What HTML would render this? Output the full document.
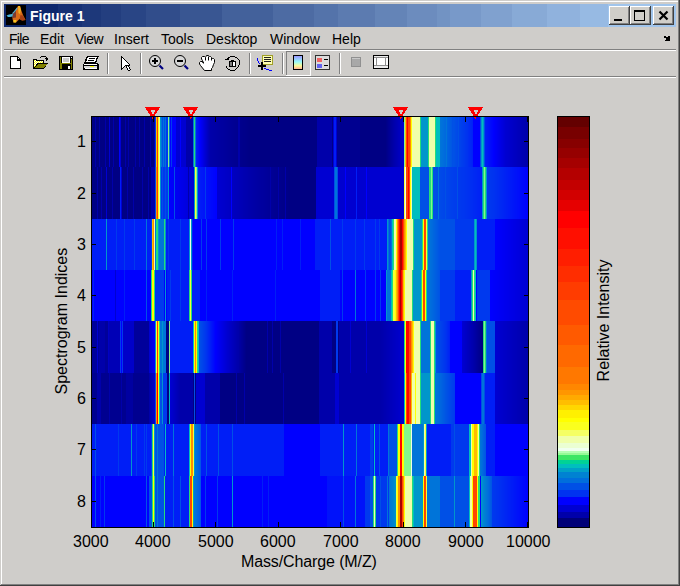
<!DOCTYPE html>
<html><head><meta charset="utf-8">
<style>
*{margin:0;padding:0;box-sizing:border-box}
html,body{width:680px;height:586px;overflow:hidden;background:#cfcdca;font-family:"Liberation Sans",sans-serif}
.abs{position:absolute}
.menu{position:absolute;top:31px;font-size:14px;line-height:16px;color:#000;white-space:nowrap}
.lbl{position:absolute;font-size:16px;color:#000;line-height:17px;white-space:nowrap}
svg{position:absolute;left:0;top:0}
</style></head><body>
<svg width="680" height="586" viewBox="0 0 680 586" shape-rendering="crispEdges">
 <!-- window frame -->
 <rect x="0" y="0" width="680" height="586" fill="#cfcdca"/>
 <rect x="1" y="1" width="677" height="1" fill="#fff"/>
 <rect x="1" y="1" width="1" height="583" fill="#fff"/>
 <rect x="678" y="0" width="1" height="585" fill="#808080"/>
 <rect x="679" y="0" width="1" height="586" fill="#404040"/>
 <rect x="0" y="585" width="680" height="1" fill="#404040"/>
 <rect x="1" y="584" width="678" height="1" fill="#808080"/>
 <!-- title bar -->
 <defs>
  <linearGradient id="tg" x1="0" x2="1" y1="0" y2="0">
   <stop offset="0" stop-color="#0a246a"/><stop offset="1" stop-color="#a6caf0"/>
  </linearGradient>
  <linearGradient id="cbi" x1="0" x2="0" y1="0" y2="1">
   <stop offset="0" stop-color="#9a96ff"/><stop offset="0.45" stop-color="#96fafa"/><stop offset="0.75" stop-color="#fafa96"/><stop offset="1" stop-color="#ffb496"/>
  </linearGradient>
 </defs>
<rect x="4" y="4" width="54" height="23" fill="#0e286d"/>
<rect x="58" y="4" width="24" height="23" fill="#163175"/>
<rect x="82" y="4" width="19" height="23" fill="#1d387a"/>
<rect x="101" y="4" width="20" height="23" fill="#233e7f"/>
<rect x="121" y="4" width="25" height="23" fill="#294585"/>
<rect x="146" y="4" width="34" height="23" fill="#314d8b"/>
<rect x="180" y="4" width="42" height="23" fill="#395692"/>
<rect x="222" y="4" width="51" height="23" fill="#43619b"/>
<rect x="273" y="4" width="41" height="23" fill="#4d6ba3"/>
<rect x="314" y="4" width="24" height="23" fill="#5473aa"/>
<rect x="338" y="4" width="37" height="23" fill="#5c7bb0"/>
<rect x="375" y="4" width="32" height="23" fill="#6484b7"/>
<rect x="407" y="4" width="30" height="23" fill="#6c8cbe"/>
<rect x="437" y="4" width="13" height="23" fill="#7293c3"/>
<rect x="450" y="4" width="31" height="23" fill="#7899c9"/>
<rect x="481" y="4" width="31" height="23" fill="#80a1cf"/>
<rect x="512" y="4" width="35" height="23" fill="#88aad6"/>
<rect x="547" y="4" width="33" height="23" fill="#90b2dd"/>
<rect x="580" y="4" width="28" height="23" fill="#97bae3"/>
<rect x="608" y="4" width="68" height="23" fill="#a1c5ec"/>
 <!-- matlab icon -->
 <rect x="6" y="5" width="20" height="20" fill="#000"/>
 <g shape-rendering="geometricPrecision">
 <polygon points="18,6 20,6 21.5,11 23,15 24,17 25.5,20 22,20.5 19.5,19 17.5,21 16,22.5 13.5,22.5 12.5,19 12.5,14 15,11" fill="#d86a18"/>
 <polygon points="20.5,15 23,15.5 25.5,20 22,20.5 19.5,19" fill="#a84014"/>
 <polygon points="12.5,12.5 16,11 16,17.5 12.5,18" fill="#7a3a30"/>
 <polygon points="18,6 20,6 21,10 20,14 18.5,13" fill="#f0b020"/>
 <polygon points="6.5,15.5 9,14.5 12,14 13,13 12.5,16.5 10,17 8,17" fill="#48b4dc"/>
 <polygon points="12.5,13 17,7.5 17.5,8.5 13.5,13.5" fill="#48b4dc"/>
 <polygon points="13.5,20 16.5,20 16,22.5 13.5,22.5" fill="#f0c820"/>
 </g>
 <!-- title buttons -->
 <g>
  <rect x="609" y="6" width="21" height="19" fill="#404040"/>
  <rect x="609" y="6" width="20" height="18" fill="#fff"/>
  <rect x="610" y="7" width="19" height="17" fill="#808080"/>
  <rect x="610" y="7" width="18" height="16" fill="#d0cec9"/>
  <rect x="614" y="19" width="8" height="2" fill="#000"/>
 </g>
 <g>
  <rect x="630" y="6" width="21" height="19" fill="#404040"/>
  <rect x="630" y="6" width="20" height="18" fill="#fff"/>
  <rect x="631" y="7" width="19" height="17" fill="#808080"/>
  <rect x="631" y="7" width="18" height="16" fill="#d0cec9"/>
  <rect x="634" y="10" width="11" height="11" fill="#000"/>
  <rect x="635" y="12" width="9" height="8" fill="#d0cec9"/>
 </g>
 <g>
  <rect x="653" y="6" width="21" height="19" fill="#404040"/>
  <rect x="653" y="6" width="20" height="18" fill="#fff"/>
  <rect x="654" y="7" width="19" height="17" fill="#808080"/>
  <rect x="654" y="7" width="18" height="16" fill="#d0cec9"/>
  <path d="M659.5 11.5 L667.5 19.5 M667.5 11.5 L659.5 19.5" stroke="#000" stroke-width="2.2" shape-rendering="geometricPrecision"/>
 </g>
 <!-- separators -->
 <rect x="4" y="49" width="672" height="1" fill="#808080"/><rect x="4" y="50" width="672" height="1" fill="#fff"/>
 <rect x="4" y="76" width="672" height="1" fill="#808080"/><rect x="4" y="77" width="672" height="1" fill="#fff"/>
 <g fill="#808080">
  <rect x="107" y="53" width="1" height="21"/><rect x="140" y="53" width="1" height="21"/><rect x="249" y="53" width="1" height="21"/><rect x="282" y="53" width="1" height="21"/><rect x="339" y="53" width="1" height="21"/>
 </g>
 <g fill="#fff">
  <rect x="108" y="53" width="1" height="21"/><rect x="141" y="53" width="1" height="21"/><rect x="250" y="53" width="1" height="21"/><rect x="283" y="53" width="1" height="21"/><rect x="340" y="53" width="1" height="21"/>
 </g>
 <!-- dock arrow -->
 <polygon points="663,37 665,36 667,38 668,36 670,36 670,41 665,41 665,40 667,39 664,38" fill="#000"/>
 <!-- new -->
 <polygon points="10,56 17,56 21,60 21,69 10,69" fill="#000"/>
 <polygon points="11,57 17,57 17,61 20,61 20,68 11,68" fill="#fff"/>
 <rect x="18" y="58" width="1" height="1" fill="#fff"/>
 <!-- open -->
 <defs><pattern id="dith" x="0" y="0" width="2" height="2" patternUnits="userSpaceOnUse"><rect width="2" height="2" fill="#ffff00"/><rect x="1" y="0" width="1" height="1" fill="#ffffff"/><rect x="0" y="1" width="1" height="1" fill="#ffffff"/></pattern></defs>
 <polygon points="33,59 37,59 37,60 44,60 44,63 48,63 44,69 33,69" fill="#000"/>
 <polygon points="34,60 36,60 36,61 43,61 43,63 37,63 35,67 34,67" fill="url(#dith)"/>
 <polygon points="38,64 47,64 43,68 35,68" fill="#808000"/>
 <rect x="41" y="56" width="5" height="1" fill="#000"/><rect x="40" y="57" width="1" height="1" fill="#000"/><rect x="46" y="57" width="1" height="1" fill="#000"/>
 <rect x="45" y="58" width="3" height="1" fill="#000"/><rect x="46" y="59" width="2" height="1" fill="#000"/><rect x="46" y="60" width="1" height="1" fill="#000"/>
 <!-- save -->
 <rect x="59" y="56" width="14" height="14" fill="#000"/>
 <rect x="60" y="57" width="1" height="12" fill="#808000"/>
 <rect x="61" y="63" width="1" height="6" fill="#808000"/>
 <rect x="71" y="59" width="1" height="10" fill="#808000"/>
 <rect x="61" y="63" width="11" height="1" fill="#808000"/>
 <rect x="62" y="57" width="8" height="6" fill="#fff"/>
 <rect x="63" y="58" width="6" height="4" fill="#c8c8c8"/>
 <rect x="71" y="57" width="1" height="1" fill="#fff"/>
 <rect x="68" y="66" width="2" height="3" fill="#fff"/>
 <!-- print -->
 <polygon points="87,56 99,56 96,63 84,63" fill="#000"/>
 <polygon points="88,57 97,57 95,62 86,62" fill="#fff"/>
 <rect x="89" y="58" width="6" height="1" fill="#000"/>
 <rect x="88" y="60" width="6" height="1" fill="#000"/>
 <polygon points="84,63 98,63 99,65 99,70 83,70 83,65" fill="#000"/>
 <rect x="84" y="64" width="13" height="1" fill="#fff"/>
 <rect x="84" y="66" width="13" height="2" fill="#dcdcdc"/>
 <rect x="90" y="66" width="4" height="1" fill="#ffff00"/>
 <rect x="85" y="68" width="12" height="1" fill="#fff"/>
 <!-- pointer -->
 <g><rect x="121" y="56" width="1" height="1" fill="#000"/><rect x="121" y="57" width="1" height="1" fill="#000"/><rect x="122" y="57" width="1" height="1" fill="#000"/><rect x="121" y="58" width="1" height="1" fill="#000"/><rect x="122" y="58" width="1" height="1" fill="#fff"/><rect x="123" y="58" width="1" height="1" fill="#000"/><rect x="121" y="59" width="1" height="1" fill="#000"/><rect x="122" y="59" width="1" height="1" fill="#fff"/><rect x="123" y="59" width="1" height="1" fill="#fff"/><rect x="124" y="59" width="1" height="1" fill="#000"/><rect x="121" y="60" width="1" height="1" fill="#000"/><rect x="122" y="60" width="1" height="1" fill="#fff"/><rect x="123" y="60" width="1" height="1" fill="#fff"/><rect x="124" y="60" width="1" height="1" fill="#fff"/><rect x="125" y="60" width="1" height="1" fill="#000"/><rect x="121" y="61" width="1" height="1" fill="#000"/><rect x="122" y="61" width="1" height="1" fill="#fff"/><rect x="123" y="61" width="1" height="1" fill="#fff"/><rect x="124" y="61" width="1" height="1" fill="#fff"/><rect x="125" y="61" width="1" height="1" fill="#fff"/><rect x="126" y="61" width="1" height="1" fill="#000"/><rect x="121" y="62" width="1" height="1" fill="#000"/><rect x="122" y="62" width="1" height="1" fill="#fff"/><rect x="123" y="62" width="1" height="1" fill="#fff"/><rect x="124" y="62" width="1" height="1" fill="#fff"/><rect x="125" y="62" width="1" height="1" fill="#fff"/><rect x="126" y="62" width="1" height="1" fill="#fff"/><rect x="127" y="62" width="1" height="1" fill="#000"/><rect x="121" y="63" width="1" height="1" fill="#000"/><rect x="122" y="63" width="1" height="1" fill="#fff"/><rect x="123" y="63" width="1" height="1" fill="#fff"/><rect x="124" y="63" width="1" height="1" fill="#fff"/><rect x="125" y="63" width="1" height="1" fill="#fff"/><rect x="126" y="63" width="1" height="1" fill="#fff"/><rect x="127" y="63" width="1" height="1" fill="#fff"/><rect x="128" y="63" width="1" height="1" fill="#000"/><rect x="121" y="64" width="1" height="1" fill="#000"/><rect x="122" y="64" width="1" height="1" fill="#fff"/><rect x="123" y="64" width="1" height="1" fill="#fff"/><rect x="124" y="64" width="1" height="1" fill="#fff"/><rect x="125" y="64" width="1" height="1" fill="#fff"/><rect x="126" y="64" width="1" height="1" fill="#fff"/><rect x="127" y="64" width="1" height="1" fill="#fff"/><rect x="128" y="64" width="1" height="1" fill="#fff"/><rect x="129" y="64" width="1" height="1" fill="#000"/><rect x="121" y="65" width="1" height="1" fill="#000"/><rect x="122" y="65" width="1" height="1" fill="#fff"/><rect x="123" y="65" width="1" height="1" fill="#fff"/><rect x="124" y="65" width="1" height="1" fill="#fff"/><rect x="125" y="65" width="1" height="1" fill="#000"/><rect x="126" y="65" width="1" height="1" fill="#000"/><rect x="127" y="65" width="1" height="1" fill="#000"/><rect x="128" y="65" width="1" height="1" fill="#000"/><rect x="129" y="65" width="1" height="1" fill="#000"/><rect x="121" y="66" width="1" height="1" fill="#000"/><rect x="122" y="66" width="1" height="1" fill="#fff"/><rect x="123" y="66" width="1" height="1" fill="#fff"/><rect x="124" y="66" width="1" height="1" fill="#000"/><rect x="126" y="66" width="1" height="1" fill="#000"/><rect x="127" y="66" width="1" height="1" fill="#fff"/><rect x="128" y="66" width="1" height="1" fill="#000"/><rect x="121" y="67" width="1" height="1" fill="#000"/><rect x="122" y="67" width="1" height="1" fill="#fff"/><rect x="123" y="67" width="1" height="1" fill="#000"/><rect x="126" y="67" width="1" height="1" fill="#000"/><rect x="127" y="67" width="1" height="1" fill="#fff"/><rect x="128" y="67" width="1" height="1" fill="#fff"/><rect x="129" y="67" width="1" height="1" fill="#000"/><rect x="121" y="68" width="1" height="1" fill="#000"/><rect x="122" y="68" width="1" height="1" fill="#000"/><rect x="127" y="68" width="1" height="1" fill="#000"/><rect x="128" y="68" width="1" height="1" fill="#fff"/><rect x="129" y="68" width="1" height="1" fill="#000"/><rect x="121" y="69" width="1" height="1" fill="#000"/><rect x="127" y="69" width="1" height="1" fill="#000"/><rect x="128" y="69" width="1" height="1" fill="#fff"/><rect x="129" y="69" width="1" height="1" fill="#fff"/><rect x="130" y="69" width="1" height="1" fill="#000"/><rect x="128" y="70" width="1" height="1" fill="#000"/><rect x="129" y="70" width="1" height="1" fill="#000"/></g>
 <!-- zoom in -->
 <g shape-rendering="geometricPrecision">
 <circle cx="155" cy="61" r="5.5" fill="#d8d8d8" stroke="#000" stroke-width="1"/>
 <path d="M159.5 65.5 L163 69" stroke="#000080" stroke-width="2.2"/>
 <circle cx="180" cy="61" r="5.5" fill="#d8d8d8" stroke="#000" stroke-width="1"/>
 <path d="M184.5 65.5 L188 69" stroke="#000080" stroke-width="2.2"/>
 </g>
 <rect x="152" y="60" width="6" height="2" fill="#000"/><rect x="154" y="58" width="2" height="6" fill="#000"/>
 <rect x="177" y="60" width="6" height="2" fill="#000"/>
 <!-- hand -->
 <g transform="translate(0.5,0.5)" shape-rendering="geometricPrecision">
 <path d="M204 70 L200 65 L199 63.5 L199 62 L200 61 L202 61 L203 62.5 L202 60 L201 58.5 L201 57 L202 56 L204 56 L205 57 L205.5 56 L206 55 L208 55 L209 56 L210 56 L211 57 L211 59 L212 58 L213 58 L214 59 L214 62 L213 64 L212 67 L211 68 L211 70 Z" fill="#fff" stroke="#000" stroke-width="1"/>
 <path d="M205 57 L205 60 M208 56 L208 60 M211 58 L211 60 M202 61 L203 63" stroke="#000" stroke-width="1" fill="none"/>
 </g>
 <!-- rotate -->
 <g><rect x="230" y="56" width="5" height="1" fill="#000"/><rect x="235" y="57" width="2" height="1" fill="#000"/><rect x="237" y="58" width="1" height="1" fill="#000"/><rect x="238" y="59" width="1" height="1" fill="#000"/><rect x="239" y="60" width="1" height="5" fill="#000"/><rect x="238" y="65" width="1" height="2" fill="#000"/><rect x="237" y="67" width="1" height="1" fill="#000"/><rect x="236" y="68" width="1" height="1" fill="#000"/><rect x="235" y="69" width="1" height="1" fill="#000"/><rect x="230" y="70" width="5" height="1" fill="#000"/><rect x="228" y="69" width="2" height="1" fill="#000"/><rect x="227" y="68" width="1" height="1" fill="#000"/><rect x="226" y="66" width="1" height="2" fill="#000"/><rect x="228" y="57" width="1" height="1" fill="#000"/><rect x="227" y="58" width="2" height="1" fill="#000"/><rect x="225" y="59" width="4" height="1" fill="#000"/><rect x="229" y="57" width="1" height="1" fill="#000"/><rect x="229" y="61" width="7" height="6" fill="#000"/><rect x="230" y="62" width="2" height="4" fill="#808080"/><rect x="232" y="62" width="3" height="4" fill="#fff"/><rect x="231" y="60" width="3" height="1" fill="#000"/><rect x="232" y="61" width="1" height="5" fill="#000"/></g>
 <!-- data cursor -->
 <rect x="262" y="55" width="11" height="10" fill="#a0a028"/>
 <rect x="263" y="56" width="9" height="8" fill="#ffffb4"/>
 <rect x="264" y="57" width="7" height="1" fill="#202020"/><rect x="264" y="59" width="7" height="1" fill="#202020"/><rect x="264" y="61" width="7" height="1" fill="#202020"/>
 <rect x="258" y="65" width="8" height="2" fill="#000"/><rect x="261" y="62" width="2" height="8" fill="#000"/>
 <rect x="257" y="58" width="1" height="3" fill="#0000ff"/><rect x="258" y="61" width="1" height="2" fill="#0000ff"/><rect x="259" y="63" width="1" height="1" fill="#0000ff"/>
 <rect x="264" y="68" width="2" height="1" fill="#0000ff"/><rect x="266" y="69" width="3" height="1" fill="#0000ff"/><rect x="269" y="70" width="3" height="1" fill="#0000ff"/>
 <!-- pressed colorbar button -->
 <rect x="286" y="51" width="25" height="1" fill="#808080"/><rect x="286" y="51" width="1" height="25" fill="#808080"/>
 <rect x="310" y="51" width="1" height="25" fill="#fff"/><rect x="286" y="75" width="25" height="1" fill="#fff"/>
 <rect x="293" y="55" width="10" height="15" fill="#000"/>
 <rect x="294" y="56" width="8" height="13" fill="url(#cbi)"/>
 <!-- legend -->
 <rect x="315" y="55" width="15" height="15" fill="#303030"/>
 <rect x="316" y="56" width="13" height="13" fill="#dcdcdc"/>
 <rect x="317" y="58" width="5" height="4" fill="#f06464"/><rect x="317" y="64" width="5" height="4" fill="#6464f0"/>
 <rect x="324" y="59" width="4" height="1" fill="#000"/><rect x="324" y="65" width="4" height="1" fill="#000"/>
 <!-- hide plot tools -->
 <rect x="351" y="57" width="10" height="10" fill="#909090"/>
 <rect x="352" y="58" width="8" height="8" fill="#a8a8a8"/>
 <rect x="352" y="58" width="8" height="1" fill="#c8c8c8"/>
 <!-- show plot tools -->
 <rect x="373" y="55" width="16" height="14" fill="#000"/>
 <rect x="374" y="56" width="14" height="12" fill="#ececec"/>
 <rect x="374" y="58" width="14" height="7" fill="#fff"/>
 <rect x="374" y="57" width="14" height="1" fill="#909090"/>
 <rect x="374" y="65" width="14" height="1" fill="#909090"/>
 <rect x="376" y="57" width="1" height="9" fill="#909090"/>
 <rect x="385" y="57" width="1" height="9" fill="#909090"/>
 <!-- markers -->
 <g id="mk"></g>
</svg>
<div class="abs" style="left:30px;top:8px;color:#fff;font:bold 14px/16px 'Liberation Sans',sans-serif">Figure 1</div>
<div class="menu" style="left:9px;letter-spacing:-0.7px">File</div>
<div class="menu" style="left:40px">Edit</div>
<div class="menu" style="left:75px;letter-spacing:-0.5px">View</div>
<div class="menu" style="left:114px">Insert</div>
<div class="menu" style="left:161px">Tools</div>
<div class="menu" style="left:206px">Desktop</div>
<div class="menu" style="left:270px">Window</div>
<div class="menu" style="left:332px">Help</div>

<!-- heatmap -->
<div class="abs" style="left:91px;top:116px;width:437px;height:411px;overflow:hidden">
<div style="position:absolute;left:0;top:0px;width:437px;height:51px;background:linear-gradient(to right,#000084 0px 4px,#0000aa 4px 5px,#000084 5px 8px,#0000aa 8px 9px,#000084 9px 14px,#0000aa 14px 15px,#000084 15px 18px,#0000d2 18px 19px,#000084 19px 22px,#0000aa 22px 23px,#000084 23px 28px,#0000ff 28px 29px,#0000d2 29px 30px,#000084 30px 34px,#0000aa 34px 35px,#000084 35px 37px,#0000aa 37px 38px,#000084 38px 44px,#0000aa 44px 45px,#000084 45px 48px,#0000aa 48px 49px,#000084 49px 53px,#0000aa 53px 54px,#000084 54px 59px,#0000aa 59px 60px,#000084 60px 63px,#0000aa 63px 64px,#0039ee 64px 65px,#ffbc00 65px 66px,#ff4600 66px 67px,#ffff00 67px 68px,#f0ffaa 68px 69px,#0096cb 69px 70px,#0074d9 70px 71px,#0050e6 71px 72px,#0074d9 72px 73px,#0050e6 73px 74px,#0074d9 74px 75px,#0039ee 75px 77px,#84f68c 77px 78px,#0074d9 78px 79px,#0000ff 79px 80px,#0039ee 80px 81px,#0000ff 81px 85px,#0000d2 85px 89px,#0000ff 89px 90px,#0000d2 90px 95px,#0000aa 95px 102px,#0074d9 102px 103px,#23de79 103px 104px,#0074d9 104px 105px,#001ef6 105px 106px,#0016f8 106px 107px,#000efb 107px 108px,#0005fd 108px 109px,#0000fc 109px 110px,#0000f3 110px 111px,#0000eb 111px 112px,#0000e2 112px 113px,#0000d9 113px 114px,#0000d1 114px 115px,#0000c9 115px 116px,#0000c1 116px 117px,#0000b9 117px 118px,#0000b2 118px 119px,#0000aa 119px 120px,#0000a9 120px 121px,#0000a8 121px 122px,#0000a7 122px 123px,#0000a6 123px 124px,#0000a5 124px 125px,#0000a4 125px 126px,#0000a3 126px 127px,#0000a2 127px 128px,#0000a1 128px 129px,#0000a0 129px 130px,#00009f 130px 132px,#00009e 132px 133px,#00009d 133px 134px,#00009c 134px 135px,#00009b 135px 136px,#00009a 136px 137px,#000099 137px 138px,#000098 138px 139px,#000097 139px 140px,#000096 140px 141px,#000095 141px 142px,#000094 142px 143px,#000093 143px 144px,#000092 144px 145px,#000091 145px 146px,#000090 146px 147px,#0000aa 147px 149px,#00008d 149px 150px,#00008c 150px 151px,#00008b 151px 152px,#00008a 152px 154px,#000089 154px 155px,#000088 155px 156px,#000087 156px 157px,#000086 157px 158px,#000085 158px 159px,#000084 159px 226px,#0000aa 226px 241px,#000084 241px 242px,#0000d2 242px 243px,#001ef6 243px 245px,#0000d2 245px 246px,#000090 246px 269px,#000084 269px 295px,#000088 295px 296px,#00008d 296px 297px,#000092 297px 298px,#000096 298px 299px,#00009b 299px 300px,#0000a0 300px 301px,#0000a4 301px 302px,#0000a9 302px 303px,#0000ad 303px 304px,#0000b1 304px 305px,#0000b4 305px 306px,#0000b8 306px 307px,#0000bc 307px 308px,#0000bf 308px 309px,#0000c3 309px 310px,#0000c7 310px 311px,#0000cb 311px 312px,#0000ce 312px 313px,#84f68c 313px 314px,#ffbc00 314px 315px,#ff4600 315px 316px,#ff0000 316px 317px,#ff4600 317px 319px,#ff8d00 319px 320px,#ffff00 320px 321px,#f0ffaa 321px 329px,#23de79 329px 330px,#0096cb 330px 337px,#23de79 337px 338px,#f0ffaa 338px 344px,#23de79 344px 345px,#00bebe 345px 349px,#0074d9 349px 350px,#0072da 350px 351px,#0070db 351px 352px,#006edc 352px 353px,#006bdd 353px 354px,#0069de 354px 355px,#0074d9 355px 356px,#0063e0 356px 357px,#0060e1 357px 358px,#005de2 358px 359px,#005be2 359px 360px,#0058e3 360px 361px,#0050e6 361px 362px,#0052e5 362px 363px,#0050e6 363px 364px,#004de7 364px 365px,#004be8 365px 366px,#0049e8 366px 367px,#0050e6 367px 368px,#0044ea 368px 369px,#0042eb 369px 370px,#003fec 370px 371px,#003dec 371px 372px,#003bed 372px 373px,#0039ee 373px 374px,#0036ef 374px 375px,#0034ef 375px 376px,#0032f0 376px 377px,#002ef1 377px 378px,#002bf2 378px 379px,#0028f3 379px 380px,#0025f4 380px 381px,#0021f5 381px 382px,#0000ff 382px 389px,#0050e6 389px 390px,#0096cb 390px 391px,#00bebe 391px 392px,#0096cb 392px 393px,#0050e6 393px 394px,#001ef6 394px 395px,#001af7 395px 396px,#0017f8 396px 397px,#0013f9 397px 398px,#000ffa 398px 399px,#000cfb 399px 400px,#0008fd 400px 401px,#0005fe 401px 402px,#0001ff 402px 403px,#0000fc 403px 404px,#0000f8 404px 405px,#0000f5 405px 406px,#0000f1 406px 407px,#0000ed 407px 408px,#0000e9 408px 409px,#0000e5 409px 410px,#0000e1 410px 411px,#0000de 411px 412px,#0000da 412px 413px,#0000d6 413px 414px,#0000d2 414px 415px,#0000d0 415px 416px,#0000cf 416px 417px,#0000cd 417px 418px,#0000cb 418px 419px,#0000c9 419px 420px,#0000c8 420px 421px,#0000c6 421px 422px,#0000c4 422px 423px,#0000c2 423px 424px,#0000c1 424px 425px,#0000bf 425px 426px,#0000bd 426px 427px,#0000bb 427px 428px,#0000ba 428px 429px,#0000b8 429px 430px,#0000b6 430px 431px,#0000b4 431px 432px,#0000b3 432px 433px,#0000b1 433px 434px,#0000af 434px 435px,#0000ad 435px 436px,#0000ac 436px 437px)"></div>
<div style="position:absolute;left:0;top:51px;width:437px;height:52px;background:linear-gradient(to right,#000084 0px 6px,#0000aa 6px 7px,#000084 7px 10px,#0000aa 10px 11px,#000084 11px 15px,#0000d2 15px 16px,#000084 16px 21px,#0000aa 21px 22px,#000084 22px 29px,#001ef6 29px 30px,#0000d2 30px 31px,#000084 31px 36px,#0000aa 36px 37px,#000084 37px 42px,#0000aa 42px 43px,#000084 43px 51px,#0000aa 51px 52px,#000084 52px 57px,#0000aa 57px 58px,#000084 58px 60px,#0000aa 60px 64px,#0050e6 64px 65px,#ff8d00 65px 66px,#ff4600 66px 67px,#ffff00 67px 68px,#f0ffaa 68px 69px,#0096cb 69px 70px,#0039ee 70px 71px,#0050e6 71px 72px,#0039ee 72px 74px,#0050e6 74px 75px,#0039ee 75px 77px,#0096cb 77px 78px,#0000ff 78px 79px,#0000fd 79px 80px,#0000fb 80px 81px,#0000fa 81px 82px,#0000f8 82px 83px,#0050e6 83px 84px,#0000f4 84px 85px,#0000f2 85px 86px,#0000f1 86px 87px,#0000ef 87px 88px,#0000ed 88px 89px,#0000eb 89px 90px,#0000e9 90px 91px,#0000e8 91px 92px,#0000e6 92px 93px,#0000e4 93px 94px,#0000e2 94px 95px,#0000e0 95px 96px,#0000df 96px 97px,#0000aa 97px 98px,#0000db 98px 99px,#0000d9 99px 100px,#0000d7 100px 101px,#0000d6 101px 102px,#0000d4 102px 103px,#0096cb 103px 104px,#f8ff37 104px 105px,#84f68c 105px 106px,#0096cb 106px 107px,#001ef6 107px 108px,#001cf6 108px 109px,#001bf7 109px 110px,#0019f7 110px 111px,#0018f8 111px 112px,#0016f8 112px 113px,#0015f9 113px 114px,#0039ee 114px 115px,#0011fa 115px 116px,#0010fa 116px 117px,#000efb 117px 118px,#000dfb 118px 119px,#000bfc 119px 120px,#0009fc 120px 121px,#0008fd 121px 122px,#0006fd 122px 123px,#0005fe 123px 124px,#0003fe 124px 125px,#0002ff 125px 126px,#0000d2 126px 127px,#0000d1 127px 128px,#0000d0 128px 129px,#0000ce 129px 130px,#0000cd 130px 131px,#0000cc 131px 132px,#0000cb 132px 133px,#0000ca 133px 134px,#0000c8 134px 135px,#0000c7 135px 136px,#0000c6 136px 137px,#0000c5 137px 138px,#0000c3 138px 139px,#0000c2 139px 140px,#0000ff 140px 141px,#0000c0 141px 142px,#0000bf 142px 143px,#0000bd 143px 144px,#0000bc 144px 145px,#0000bb 145px 146px,#0000ba 146px 147px,#0000b9 147px 148px,#0000b7 148px 149px,#0000b6 149px 150px,#0000b5 150px 151px,#0000b4 151px 152px,#0000b2 152px 153px,#0000b1 153px 154px,#0000b0 154px 155px,#0000af 155px 156px,#0000ae 156px 157px,#0000ac 157px 158px,#0000ab 158px 159px,#0000aa 159px 160px,#0000a9 160px 161px,#0000a8 161px 162px,#0000a7 162px 163px,#0000a6 163px 164px,#0000a5 164px 165px,#0000a4 165px 166px,#0000a3 166px 167px,#0000a2 167px 168px,#0000a1 168px 169px,#0000a0 169px 170px,#00009f 170px 172px,#00009e 172px 173px,#00009d 173px 174px,#00009c 174px 175px,#00009b 175px 176px,#00009a 176px 177px,#000099 177px 178px,#000098 178px 179px,#0000aa 179px 180px,#000096 180px 181px,#000095 181px 182px,#000094 182px 183px,#000093 183px 184px,#000092 184px 185px,#000091 185px 186px,#000090 186px 187px,#0000aa 187px 188px,#00008e 188px 189px,#00008d 189px 190px,#00008c 190px 191px,#00008b 191px 192px,#00008a 192px 194px,#0000aa 194px 195px,#000088 195px 196px,#000087 196px 197px,#000086 197px 198px,#000085 198px 199px,#000084 199px 225px,#0000d2 225px 243px,#0050e6 243px 244px,#0074d9 244px 246px,#0050e6 246px 247px,#0000d0 247px 254px,#0000ff 254px 255px,#0000d0 255px 265px,#001ef6 265px 266px,#0000d0 266px 275px,#0000ff 275px 276px,#0000d0 276px 289px,#0000d2 289px 313px,#f8ff37 313px 314px,#ebffe4 314px 315px,#ff4600 315px 317px,#ff0000 317px 318px,#ff4600 318px 319px,#ffff00 319px 320px,#f0ffaa 320px 321px,#00bebe 321px 329px,#0050e6 329px 338px,#23de79 338px 340px,#84f68c 340px 341px,#23de79 341px 342px,#0050e6 342px 343px,#004fe6 343px 344px,#004ee7 344px 345px,#004de7 345px 346px,#004ce7 346px 347px,#0074d9 347px 348px,#004be8 348px 349px,#004ae8 349px 350px,#0049e8 350px 351px,#0048e9 351px 352px,#0047e9 352px 353px,#0046e9 353px 354px,#0050e6 354px 355px,#0045ea 355px 356px,#0044ea 356px 357px,#0043ea 357px 358px,#0042eb 358px 359px,#0041eb 359px 360px,#0040eb 360px 361px,#003fec 361px 362px,#003eec 362px 363px,#003dec 363px 365px,#003ced 365px 366px,#0050e6 366px 367px,#003aed 367px 368px,#0039ee 368px 369px,#0038ee 369px 370px,#0037ee 370px 371px,#0036ef 371px 373px,#0035ef 373px 374px,#0034ef 374px 375px,#0033f0 375px 376px,#0032f0 376px 377px,#0031f0 377px 378px,#0030f1 378px 379px,#002ef1 379px 380px,#002df2 380px 381px,#002cf2 381px 382px,#002af2 382px 383px,#0029f3 383px 384px,#0028f3 384px 385px,#0027f3 385px 386px,#0025f4 386px 387px,#0024f4 387px 388px,#0023f4 388px 389px,#0022f5 389px 390px,#0020f5 390px 391px,#0096cb 391px 392px,#23de79 392px 393px,#84f68c 393px 394px,#23de79 394px 395px,#0096cb 395px 396px,#0039ee 396px 397px,#0038ee 397px 398px,#0037ee 398px 399px,#0036ef 399px 400px,#0035ef 400px 401px,#0034ef 401px 402px,#0033f0 402px 403px,#0032f0 403px 404px,#0030f1 404px 405px,#002ff1 405px 406px,#002df1 406px 407px,#002cf2 407px 408px,#002af2 408px 409px,#0029f3 409px 410px,#0028f3 410px 411px,#0026f4 411px 412px,#0025f4 412px 413px,#0023f4 413px 414px,#0022f5 414px 415px,#0020f5 415px 416px,#001ff6 416px 417px,#001df6 417px 418px,#001cf7 418px 419px,#001af7 419px 420px,#0019f8 420px 421px,#0017f8 421px 422px,#0016f8 422px 423px,#0014f9 423px 424px,#0013f9 424px 425px,#0012fa 425px 426px,#0010fa 426px 427px,#000ffb 427px 428px,#000dfb 428px 429px,#000cfb 429px 430px,#000afc 430px 431px,#0009fc 431px 432px,#0007fd 432px 433px,#0006fd 433px 434px,#0004fe 434px 435px,#0003fe 435px 436px,#0001ff 436px 437px)"></div>
<div style="position:absolute;left:0;top:103px;width:437px;height:51px;background:linear-gradient(to right,#001ef6 0px 15px,#0096cb 15px 16px,#001ef6 16px 25px,#0039ee 25px 26px,#001ef6 26px 33px,#0039ee 33px 34px,#001ef6 34px 43px,#0039ee 43px 44px,#001ef6 44px 55px,#0074d9 55px 56px,#001ef6 56px 60px,#0039ee 60px 61px,#ffbc00 61px 62px,#ff8d00 62px 63px,#f0ffaa 63px 64px,#0074d9 64px 65px,#23de79 65px 67px,#0096cb 67px 68px,#0074d9 68px 73px,#23de79 73px 74px,#0096cb 74px 75px,#001ef6 75px 77px,#0039ee 77px 78px,#001ef6 78px 89px,#0039ee 89px 90px,#001ef6 90px 98px,#0096cb 98px 99px,#ebffe4 99px 100px,#0096cb 100px 101px,#001ef6 101px 102px,#0000ff 102px 110px,#0039ee 110px 111px,#0000ff 111px 115px,#0039ee 115px 116px,#0000ff 116px 129px,#0039ee 129px 130px,#0000ff 130px 142px,#0039ee 142px 143px,#0000ff 143px 185px,#001ef6 185px 186px,#0000ff 186px 191px,#001ef6 191px 192px,#0000ff 192px 209px,#001ef6 209px 210px,#0000ff 210px 224px,#001ef6 224px 239px,#0050e6 239px 240px,#001ef6 240px 251px,#0039ee 251px 252px,#001ef6 252px 264px,#0039ee 264px 265px,#001ef6 265px 273px,#0039ee 273px 274px,#001ef6 274px 284px,#0039ee 284px 285px,#001ef6 285px 288px,#0039ee 288px 289px,#001ef6 289px 296px,#0096cb 296px 297px,#0074d9 297px 298px,#0050e6 298px 300px,#0074d9 300px 301px,#00bebe 301px 302px,#23de79 302px 303px,#f0ffaa 303px 305px,#ffff00 305px 306px,#ff8d00 306px 307px,#ff4600 307px 308px,#ff0000 308px 309px,#aa0000 309px 311px,#ff0000 311px 312px,#ff4600 312px 313px,#ff8d00 313px 314px,#ffbc00 314px 315px,#ffff00 315px 316px,#f0ffaa 316px 322px,#23de79 322px 323px,#0096cb 323px 331px,#23de79 331px 332px,#ffff00 332px 333px,#ff4600 333px 335px,#f8ff37 335px 336px,#23de79 336px 337px,#0074d9 337px 338px,#0072da 338px 339px,#0070db 339px 340px,#006ddc 340px 341px,#006add 341px 342px,#0066de 342px 343px,#0063e0 343px 344px,#0060e1 344px 345px,#005de2 345px 346px,#005ae3 346px 347px,#0056e4 347px 348px,#0053e5 348px 349px,#0050e6 349px 364px,#0039ee 364px 383px,#0096cb 383px 384px,#00bebe 384px 385px,#0096cb 385px 386px,#001ef6 386px 404px,#0000ff 404px 405px,#0000fe 405px 406px,#0000fc 406px 407px,#0000fb 407px 408px,#0000fa 408px 409px,#0000f8 409px 410px,#0000f7 410px 411px,#0000f5 411px 412px,#0000f4 412px 413px,#0000f3 413px 414px,#0000f1 414px 415px,#0000f0 415px 416px,#0000ef 416px 417px,#0000ed 417px 418px,#0000ec 418px 419px,#0000eb 419px 420px,#0000e9 420px 421px,#0000e8 421px 422px,#0000e6 422px 423px,#0000e5 423px 424px,#0000e4 424px 425px,#0000e2 425px 426px,#0000e1 426px 427px,#0000e0 427px 428px,#0000de 428px 429px,#0000dd 429px 430px,#0000dc 430px 431px,#0000da 431px 432px,#0000d9 432px 433px,#0000d7 433px 434px,#0000d6 434px 435px,#0000d5 435px 436px,#0000d3 436px 437px)"></div>
<div style="position:absolute;left:0;top:154px;width:437px;height:51px;background:linear-gradient(to right,#0000ff 0px 2px,#001ef6 2px 3px,#0000ff 3px 24px,#0000d2 24px 25px,#0000ff 25px 33px,#001ef6 33px 34px,#0000ff 34px 55px,#0050e6 55px 56px,#0000ff 56px 60px,#23de79 60px 61px,#ffff00 61px 63px,#23de79 63px 64px,#0039ee 64px 73px,#0000ff 73px 74px,#0096cb 74px 75px,#0000ff 75px 76px,#001ef6 76px 79px,#0039ee 79px 80px,#001ef6 80px 89px,#0039ee 89px 90px,#001ef6 90px 98px,#23de79 98px 99px,#f8ff37 99px 100px,#23de79 100px 101px,#001ef6 101px 109px,#0000ff 109px 115px,#001ef6 115px 116px,#0000ff 116px 141px,#001ef6 141px 142px,#0000ff 142px 184px,#001ef6 184px 185px,#0000ff 185px 229px,#001ef6 229px 249px,#0000ff 249px 251px,#0039ee 251px 252px,#0000ff 252px 264px,#0074d9 264px 265px,#0000ff 265px 274px,#0039ee 274px 275px,#0000ff 275px 284px,#0039ee 284px 285px,#0000ff 285px 289px,#0039ee 289px 290px,#0000ff 290px 295px,#0096cb 295px 296px,#0074d9 296px 300px,#00bebe 300px 301px,#23de79 301px 302px,#f8ff37 302px 304px,#ffff00 304px 305px,#ffbc00 305px 306px,#ff8d00 306px 307px,#ff4600 307px 308px,#ff0000 308px 309px,#aa0000 309px 310px,#ff0000 310px 311px,#ff4600 311px 312px,#ffbc00 312px 313px,#ffff00 313px 314px,#f0ffaa 314px 321px,#23de79 321px 322px,#0096cb 322px 330px,#23de79 330px 331px,#ffff00 331px 332px,#ff4600 332px 334px,#ffff00 334px 335px,#23de79 335px 336px,#0074d9 336px 337px,#0072da 337px 338px,#0070db 338px 339px,#006edc 339px 340px,#006bdd 340px 341px,#0068de 341px 342px,#0065df 342px 343px,#0062e0 343px 344px,#005fe1 344px 345px,#005ce2 345px 346px,#0059e3 346px 347px,#0056e4 347px 348px,#0053e5 348px 349px,#0039ee 349px 364px,#001ef6 364px 380px,#0096cb 380px 381px,#23de79 381px 382px,#f0ffaa 382px 383px,#23de79 383px 384px,#00bebe 384px 385px,#0000ff 385px 386px,#0039ee 386px 399px,#0000ff 399px 400px,#0000fe 400px 401px,#0000fd 401px 402px,#0000fb 402px 403px,#0000fa 403px 404px,#0000f9 404px 405px,#0000f8 405px 406px,#0000f7 406px 407px,#0000f6 407px 408px,#0000f4 408px 409px,#0000f3 409px 410px,#0000f2 410px 411px,#0000f1 411px 412px,#0000f0 412px 413px,#0000ee 413px 414px,#0000ed 414px 415px,#0000ec 415px 416px,#0000eb 416px 417px,#0000ea 417px 418px,#0000e8 418px 419px,#0000e7 419px 420px,#0000e6 420px 421px,#0000e5 421px 422px,#0000e4 422px 423px,#0000e3 423px 424px,#0000e1 424px 425px,#0000e0 425px 426px,#0000df 426px 427px,#0000de 427px 428px,#0000dd 428px 429px,#0000db 429px 430px,#0000da 430px 431px,#0000d9 431px 432px,#0000d8 432px 433px,#0000d7 433px 434px,#0000d6 434px 435px,#0000d4 435px 436px,#0000d3 436px 437px)"></div>
<div style="position:absolute;left:0;top:205px;width:437px;height:52px;background:linear-gradient(to right,#00009b 0px 6px,#0000d2 6px 7px,#00009b 7px 8px,#0000aa 8px 14px,#00009b 14px 17px,#0000c4 17px 18px,#0000b6 18px 29px,#0039ee 29px 30px,#0000ff 30px 31px,#0039ee 31px 32px,#0000c9 32px 43px,#00009b 43px 58px,#0000d2 58px 59px,#0000da 59px 60px,#0000e1 60px 61px,#0000e8 61px 62px,#0000f0 62px 63px,#0000f8 63px 64px,#0096cb 64px 65px,#f8ff37 65px 66px,#ff4600 66px 67px,#ffff00 67px 68px,#23de79 68px 69px,#0074d9 69px 71px,#0096cb 71px 72px,#0074d9 72px 75px,#000084 75px 78px,#84f68c 78px 79px,#001ef6 79px 102px,#00bebe 102px 103px,#ffff00 103px 104px,#ff8d00 104px 105px,#ffff00 105px 106px,#23de79 106px 107px,#00bebe 107px 108px,#0050e6 108px 109px,#004ce7 109px 110px,#0048e9 110px 111px,#0044ea 111px 112px,#0040eb 112px 113px,#003ced 113px 114px,#0038ee 114px 115px,#0033f0 115px 116px,#002ef1 116px 117px,#0028f3 117px 118px,#0023f5 118px 119px,#001df6 119px 120px,#0017f8 120px 121px,#0011fa 121px 122px,#000cfc 122px 123px,#0006fd 123px 124px,#0000ff 124px 125px,#0000fb 125px 126px,#0000f7 126px 127px,#0000f3 127px 128px,#0000ef 128px 129px,#0000eb 129px 130px,#0000e7 130px 131px,#0000e3 131px 132px,#0000df 132px 133px,#0000db 133px 134px,#0000d7 134px 135px,#0000d3 135px 136px,#0000cf 136px 137px,#0000cc 137px 138px,#0000c8 138px 139px,#0000c4 139px 140px,#0000c1 140px 141px,#0000bd 141px 142px,#0000ba 142px 143px,#0000b6 143px 144px,#0000b3 144px 145px,#0000af 145px 146px,#0000ac 146px 147px,#0000aa 147px 148px,#0000a3 148px 149px,#00009f 149px 150px,#00009a 150px 151px,#000096 151px 152px,#000091 152px 153px,#00008d 153px 154px,#000088 154px 155px,#000084 155px 176px,#0000aa 176px 177px,#000084 177px 181px,#0000aa 181px 182px,#000084 182px 189px,#0000aa 189px 190px,#000084 190px 228px,#0000aa 228px 241px,#000084 241px 245px,#0039ee 245px 247px,#000084 247px 248px,#0000aa 248px 259px,#0000d2 259px 260px,#0000aa 260px 275px,#0000d2 275px 276px,#0000aa 276px 290px,#0000ac 290px 291px,#0000ad 291px 292px,#0000af 292px 293px,#0000b1 293px 294px,#0000b2 294px 295px,#0000b4 295px 296px,#0000b6 296px 297px,#0000b7 297px 298px,#0000b9 298px 299px,#0000bb 299px 300px,#0000bc 300px 301px,#0000be 301px 302px,#0000c0 302px 303px,#0000c1 303px 304px,#0000c3 304px 305px,#0000c5 305px 306px,#0000c6 306px 307px,#0000c8 307px 308px,#0000ca 308px 309px,#0000cb 309px 310px,#0000cd 310px 311px,#0000cf 311px 312px,#0000d0 312px 313px,#23de79 313px 314px,#ffff00 314px 315px,#ff0000 315px 318px,#ff4600 318px 320px,#ff8d00 320px 321px,#ffbc00 321px 322px,#ffff00 322px 323px,#f0ffaa 323px 329px,#23de79 329px 330px,#0074d9 330px 339px,#23de79 339px 340px,#f0ffaa 340px 343px,#23de79 343px 344px,#0096cb 344px 345px,#0050e6 345px 346px,#004de7 346px 347px,#004ae8 347px 348px,#0047e9 348px 349px,#0043ea 349px 350px,#0040eb 350px 351px,#003dec 351px 352px,#003aed 352px 353px,#0037ee 353px 354px,#0034ef 354px 355px,#0030f1 355px 356px,#002bf2 356px 357px,#0027f3 357px 358px,#0022f5 358px 359px,#0000ff 359px 371px,#0000d2 371px 372px,#0000ce 372px 373px,#0000cb 373px 374px,#0000c7 374px 375px,#0000c4 375px 376px,#0000c0 376px 377px,#0000bd 377px 378px,#0000b9 378px 379px,#0000b6 379px 380px,#0000b2 380px 381px,#0000af 381px 382px,#0000ab 382px 383px,#0000a7 383px 384px,#0000a3 384px 385px,#00009e 385px 386px,#00009a 386px 387px,#000095 387px 388px,#000091 388px 389px,#00008d 389px 390px,#000088 390px 391px,#000084 391px 392px,#23de79 392px 393px,#84f68c 393px 394px,#23de79 394px 395px,#0074d9 395px 396px,#0050e6 396px 404px,#0000d2 404px 405px,#0000d1 405px 406px,#0000d0 406px 407px,#0000ce 407px 408px,#0000cd 408px 409px,#0000cc 409px 410px,#0000cb 410px 411px,#0000ca 411px 412px,#0000c8 412px 413px,#0000c7 413px 414px,#0000c6 414px 415px,#0000c5 415px 416px,#0000c3 416px 417px,#0000c2 417px 418px,#0000c1 418px 419px,#0000c0 419px 420px,#0000bf 420px 421px,#0000bd 421px 422px,#0000bc 422px 423px,#0000bb 423px 424px,#0000ba 424px 425px,#0000b9 425px 426px,#0000b7 426px 427px,#0000b6 427px 428px,#0000b5 428px 429px,#0000b4 429px 430px,#0000b2 430px 431px,#0000b1 431px 432px,#0000b0 432px 433px,#0000af 433px 434px,#0000ae 434px 435px,#0000ac 435px 436px,#0000ab 436px 437px)"></div>
<div style="position:absolute;left:0;top:257px;width:437px;height:51px;background:linear-gradient(to right,#000090 0px 6px,#0000aa 6px 10px,#000090 10px 18px,#0000aa 18px 19px,#000090 19px 30px,#0000aa 30px 31px,#000090 31px 35px,#0000a1 35px 42px,#000090 42px 58px,#0000aa 58px 59px,#0000b1 59px 60px,#0000b7 60px 61px,#0000be 61px 62px,#0000c5 62px 63px,#0000cb 63px 64px,#0050e6 64px 65px,#ff8d00 65px 66px,#ff0000 66px 67px,#ffff00 67px 68px,#00bebe 68px 69px,#0050e6 69px 71px,#0096cb 71px 72px,#0039ee 72px 76px,#000084 76px 78px,#00bebe 78px 79px,#0000d2 79px 80px,#0000ce 80px 81px,#0000ca 81px 82px,#0000c6 82px 83px,#0000c2 83px 84px,#0000be 84px 85px,#0000ba 85px 86px,#0000b6 86px 87px,#0000b2 87px 88px,#0000ae 88px 89px,#0000aa 89px 102px,#000084 102px 103px,#0050e6 103px 104px,#000084 104px 105px,#0000d2 105px 114px,#0000aa 114px 129px,#000084 129px 145px,#0000aa 145px 146px,#000084 146px 153px,#0000aa 153px 154px,#000084 154px 192px,#0000aa 192px 193px,#000084 193px 228px,#0000aa 228px 244px,#0000d2 244px 248px,#0000aa 248px 290px,#0000ac 290px 291px,#0000ad 291px 292px,#0000af 292px 293px,#0000b1 293px 294px,#0000b2 294px 295px,#0000b4 295px 296px,#0000b6 296px 297px,#0000b7 297px 298px,#0000b9 298px 299px,#0000bb 299px 300px,#0000bc 300px 301px,#0000be 301px 302px,#0000c0 302px 303px,#0000c1 303px 304px,#0000c3 304px 305px,#0000c5 305px 306px,#0000c6 306px 307px,#0000c8 307px 308px,#0000ca 308px 309px,#0000cb 309px 310px,#0000cd 310px 311px,#0000cf 311px 312px,#0000d0 312px 313px,#00bebe 313px 314px,#ffff00 314px 315px,#ff4600 315px 316px,#ff0000 316px 318px,#ff4600 318px 320px,#ffbc00 320px 321px,#f0ffaa 321px 324px,#ffff00 324px 325px,#f0ffaa 325px 329px,#23de79 329px 330px,#0096cb 330px 339px,#23de79 339px 340px,#f0ffaa 340px 343px,#23de79 343px 344px,#0074d9 344px 345px,#0072da 345px 346px,#006fdb 346px 347px,#006ddc 347px 348px,#0069de 348px 349px,#0066df 349px 350px,#0063e0 350px 351px,#005fe1 351px 352px,#005ce2 352px 353px,#0059e3 353px 354px,#0055e4 354px 355px,#0052e5 355px 356px,#004fe6 356px 357px,#004ce7 357px 358px,#0049e8 358px 359px,#0047e9 359px 360px,#0044ea 360px 361px,#0041eb 361px 362px,#003fec 362px 363px,#003ced 363px 364px,#0000ff 364px 390px,#0050e6 390px 391px,#0074d9 391px 393px,#0050e6 393px 394px,#001ef6 394px 404px,#0000d2 404px 405px,#0000d1 405px 406px,#0000d0 406px 407px,#0000ce 407px 408px,#0000cd 408px 409px,#0000cc 409px 410px,#0000cb 410px 411px,#0000ca 411px 412px,#0000c8 412px 413px,#0000c7 413px 414px,#0000c6 414px 415px,#0000c5 415px 416px,#0000c3 416px 417px,#0000c2 417px 418px,#0000c1 418px 419px,#0000c0 419px 420px,#0000bf 420px 421px,#0000bd 421px 422px,#0000bc 422px 423px,#0000bb 423px 424px,#0000ba 424px 425px,#0000b9 425px 426px,#0000b7 426px 427px,#0000b6 427px 428px,#0000b5 428px 429px,#0000b4 429px 430px,#0000b2 430px 431px,#0000b1 431px 432px,#0000b0 432px 433px,#0000af 433px 434px,#0000ae 434px 435px,#0000ac 435px 436px,#0000ab 436px 437px)"></div>
<div style="position:absolute;left:0;top:308px;width:437px;height:52px;background:linear-gradient(to right,#001ef6 0px 4px,#0050e6 4px 5px,#001ef6 5px 27px,#0039ee 27px 28px,#001ef6 28px 40px,#0096cb 40px 41px,#001ef6 41px 45px,#0039ee 45px 46px,#001ef6 46px 53px,#0039ee 53px 54px,#001ef6 54px 55px,#0039ee 55px 56px,#001ef6 56px 60px,#0039ee 60px 61px,#23de79 61px 62px,#f8ff37 62px 63px,#0096cb 63px 64px,#0050e6 64px 66px,#0074d9 66px 67px,#0050e6 67px 73px,#001ef6 73px 74px,#00bebe 74px 75px,#001ef6 75px 82px,#0074d9 82px 83px,#001ef6 83px 98px,#00bebe 98px 99px,#ffff00 99px 100px,#ff8d00 100px 102px,#f8ff37 102px 103px,#0096cb 103px 104px,#0074d9 104px 105px,#0070db 105px 106px,#006add 106px 107px,#0063e0 107px 108px,#005de2 108px 109px,#0056e4 109px 110px,#001ef6 110px 115px,#0050e6 115px 116px,#001ef6 116px 127px,#0050e6 127px 128px,#001ef6 128px 141px,#0050e6 141px 142px,#001ef6 142px 193px,#0000ff 193px 229px,#001ef6 229px 252px,#0096cb 252px 253px,#001ef6 253px 265px,#0074d9 265px 266px,#001ef6 266px 279px,#0039ee 279px 282px,#001ef6 282px 283px,#00bebe 283px 284px,#001ef6 284px 288px,#0050e6 288px 289px,#001ef6 289px 297px,#0074d9 297px 298px,#0050e6 298px 306px,#23de79 306px 307px,#ffff00 307px 309px,#ff0000 309px 311px,#ffff00 311px 313px,#84f68c 313px 320px,#ebffe4 320px 321px,#0074d9 321px 332px,#0096cb 332px 333px,#f0ffaa 333px 334px,#f8ff37 334px 335px,#0096cb 335px 336px,#001ef6 336px 360px,#0039ee 360px 363px,#0050e6 363px 364px,#0039ee 364px 378px,#00bebe 378px 380px,#f0ffaa 380px 381px,#ffff00 381px 383px,#ffbc00 383px 386px,#ffff00 386px 387px,#f0ffaa 387px 388px,#23de79 388px 389px,#0074d9 389px 390px,#0070db 390px 391px,#006add 391px 392px,#0063e0 392px 393px,#005de2 393px 394px,#0056e4 394px 395px,#001ef6 395px 404px,#0000ff 404px 437px)"></div>
<div style="position:absolute;left:0;top:360px;width:437px;height:51px;background:linear-gradient(to right,#0000ff 0px 4px,#0050e6 4px 5px,#0000ff 5px 9px,#001ef6 9px 10px,#0000ff 10px 13px,#0039ee 13px 14px,#0000ff 14px 55px,#0050e6 55px 56px,#0000ff 56px 58px,#0050e6 58px 61px,#23de79 61px 62px,#ffff00 62px 63px,#23de79 63px 64px,#0050e6 64px 66px,#0074d9 66px 67px,#0050e6 67px 73px,#23de79 73px 74px,#001ef6 74px 82px,#0050e6 82px 83px,#001ef6 83px 89px,#0050e6 89px 90px,#001ef6 90px 98px,#23de79 98px 99px,#ff4600 99px 101px,#ffff00 101px 102px,#0096cb 102px 103px,#0074d9 103px 104px,#0070db 104px 105px,#006cdd 105px 106px,#0066df 106px 107px,#0061e0 107px 108px,#005be2 108px 109px,#0056e4 109px 110px,#0000ff 110px 114px,#0039ee 114px 115px,#0000ff 115px 126px,#0039ee 126px 127px,#0000ff 127px 141px,#0096cb 141px 142px,#0000ff 142px 171px,#001ef6 171px 172px,#0000ff 172px 177px,#001ef6 177px 178px,#0000ff 178px 236px,#0012fa 236px 252px,#0050e6 252px 253px,#0012fa 253px 264px,#0074d9 264px 265px,#0012fa 265px 274px,#0039ee 274px 279px,#0050e6 279px 282px,#23de79 282px 283px,#f0ffaa 283px 284px,#23de79 284px 285px,#0039ee 285px 289px,#0050e6 289px 290px,#0039ee 290px 296px,#0074d9 296px 297px,#0039ee 297px 298px,#0074d9 298px 299px,#0078d7 299px 300px,#007cd5 300px 301px,#007fd3 301px 302px,#0084d1 302px 303px,#008acf 303px 304px,#0090cd 304px 305px,#f8ff37 305px 306px,#ffff00 306px 307px,#ff8d00 307px 309px,#aa0000 309px 311px,#ff4600 311px 312px,#ff8d00 312px 313px,#ffff00 313px 314px,#f0ffaa 314px 321px,#23de79 321px 322px,#00bebe 322px 323px,#0096cb 323px 332px,#ffff00 332px 333px,#ff4600 333px 335px,#f8ff37 335px 336px,#0074d9 336px 349px,#0050e6 349px 363px,#0096cb 363px 364px,#0050e6 364px 378px,#00bebe 378px 379px,#f0ffaa 379px 381px,#ffff00 381px 382px,#ff4600 382px 386px,#ffff00 386px 387px,#23de79 387px 389px,#0000ff 389px 390px,#0096cb 390px 391px,#008ece 391px 392px,#0086d1 392px 393px,#0080d3 393px 394px,#007bd6 394px 395px,#0076d8 395px 396px,#0071db 396px 397px,#006bdd 397px 398px,#0064df 398px 399px,#005ee1 399px 400px,#0057e4 400px 401px,#0039ee 401px 402px,#0038ee 402px 403px,#0037ee 403px 404px,#0036ef 404px 405px,#0034ef 405px 406px,#0033f0 406px 407px,#0032f0 407px 408px,#0030f0 408px 409px,#002ff1 409px 410px,#002df2 410px 411px,#002bf2 411px 412px,#002af2 412px 413px,#0028f3 413px 414px,#0026f4 414px 415px,#0025f4 415px 416px,#0023f4 416px 417px,#0021f5 417px 418px,#0020f6 418px 419px,#001ef6 419px 420px,#001cf6 420px 421px,#001bf7 421px 422px,#0019f8 422px 423px,#0017f8 423px 424px,#0016f8 424px 425px,#0014f9 425px 426px,#0012fa 426px 427px,#0011fa 427px 428px,#000ffa 428px 429px,#000dfb 429px 430px,#000cfc 430px 431px,#000afc 431px 432px,#0008fc 432px 433px,#0007fd 433px 434px,#0005fe 434px 435px,#0003fe 435px 436px,#0002fe 436px 437px)"></div>
</div>
<svg width="680" height="586" viewBox="0 0 680 586" shape-rendering="crispEdges" style="pointer-events:none">
 <g fill="#ff0000"><rect x="145" y="107" width="15" height="1"/>
<rect x="146" y="108" width="13" height="1"/>
<rect x="146" y="109" width="13" height="1"/>
<rect x="147" y="110" width="11" height="1"/>
<rect x="148" y="111" width="9" height="1"/>
<rect x="148" y="112" width="9" height="1"/>
<rect x="149" y="113" width="7" height="1"/>
<rect x="150" y="114" width="5" height="1"/>
<rect x="150" y="115" width="5" height="1"/>
<rect x="151" y="116" width="3" height="1"/>
<rect x="152" y="117" width="2" height="1"/>
<rect x="152" y="118" width="1" height="1"/>
<rect x="151" y="110" width="4" height="2" fill="#cfcdca"/>
<rect x="152" y="112" width="2" height="2" fill="#cfcdca"/>
<rect x="183" y="107" width="15" height="1"/>
<rect x="184" y="108" width="13" height="1"/>
<rect x="184" y="109" width="13" height="1"/>
<rect x="185" y="110" width="11" height="1"/>
<rect x="186" y="111" width="9" height="1"/>
<rect x="186" y="112" width="9" height="1"/>
<rect x="187" y="113" width="7" height="1"/>
<rect x="188" y="114" width="5" height="1"/>
<rect x="188" y="115" width="5" height="1"/>
<rect x="189" y="116" width="3" height="1"/>
<rect x="190" y="117" width="2" height="1"/>
<rect x="190" y="118" width="1" height="1"/>
<rect x="189" y="110" width="4" height="2" fill="#cfcdca"/>
<rect x="190" y="112" width="2" height="2" fill="#cfcdca"/>
<rect x="393" y="107" width="15" height="1"/>
<rect x="394" y="108" width="13" height="1"/>
<rect x="394" y="109" width="13" height="1"/>
<rect x="395" y="110" width="11" height="1"/>
<rect x="396" y="111" width="9" height="1"/>
<rect x="396" y="112" width="9" height="1"/>
<rect x="397" y="113" width="7" height="1"/>
<rect x="398" y="114" width="5" height="1"/>
<rect x="398" y="115" width="5" height="1"/>
<rect x="399" y="116" width="3" height="1"/>
<rect x="400" y="117" width="2" height="1"/>
<rect x="400" y="118" width="1" height="1"/>
<rect x="399" y="110" width="4" height="2" fill="#cfcdca"/>
<rect x="400" y="112" width="2" height="2" fill="#cfcdca"/>
<rect x="468" y="107" width="15" height="1"/>
<rect x="469" y="108" width="13" height="1"/>
<rect x="469" y="109" width="13" height="1"/>
<rect x="470" y="110" width="11" height="1"/>
<rect x="471" y="111" width="9" height="1"/>
<rect x="471" y="112" width="9" height="1"/>
<rect x="472" y="113" width="7" height="1"/>
<rect x="473" y="114" width="5" height="1"/>
<rect x="473" y="115" width="5" height="1"/>
<rect x="474" y="116" width="3" height="1"/>
<rect x="474" y="117" width="2" height="1"/>
<rect x="475" y="118" width="1" height="1"/>
<rect x="474" y="110" width="4" height="2" fill="#cfcdca"/>
<rect x="475" y="112" width="2" height="2" fill="#cfcdca"/></g>
 <rect x="91.5" y="116.5" width="437" height="411" fill="none" stroke="#000" stroke-width="1"/>
 <g fill="#000">
  <rect x="91" y="117" width="1" height="5"/>
<rect x="91" y="522" width="1" height="5"/>
<rect x="153" y="117" width="1" height="5"/>
<rect x="153" y="522" width="1" height="5"/>
<rect x="215" y="117" width="1" height="5"/>
<rect x="215" y="522" width="1" height="5"/>
<rect x="278" y="117" width="1" height="5"/>
<rect x="278" y="522" width="1" height="5"/>
<rect x="340" y="117" width="1" height="5"/>
<rect x="340" y="522" width="1" height="5"/>
<rect x="403" y="117" width="1" height="5"/>
<rect x="403" y="522" width="1" height="5"/>
<rect x="465" y="117" width="1" height="5"/>
<rect x="465" y="522" width="1" height="5"/>
<rect x="527" y="117" width="1" height="5"/>
<rect x="527" y="522" width="1" height="5"/>
<rect x="92" y="141" width="4" height="1"/>
<rect x="524" y="141" width="4" height="1"/>
<rect x="92" y="193" width="4" height="1"/>
<rect x="524" y="193" width="4" height="1"/>
<rect x="92" y="244" width="4" height="1"/>
<rect x="524" y="244" width="4" height="1"/>
<rect x="92" y="295" width="4" height="1"/>
<rect x="524" y="295" width="4" height="1"/>
<rect x="92" y="347" width="4" height="1"/>
<rect x="524" y="347" width="4" height="1"/>
<rect x="92" y="398" width="4" height="1"/>
<rect x="524" y="398" width="4" height="1"/>
<rect x="92" y="449" width="4" height="1"/>
<rect x="524" y="449" width="4" height="1"/>
<rect x="92" y="501" width="4" height="1"/>
<rect x="524" y="501" width="4" height="1"/>
 </g>
</svg>
<!-- colorbar -->
<div class="abs" style="left:557px;top:116px;width:33px;height:412px;border:1px solid #000;background:linear-gradient(to bottom,#640000 -1px 10px,#780000 10px 22px,#870000 22px 31px,#960000 31px 41px,#a50000 41px 51px,#b40000 51px 63px,#c30000 63px 73px,#d20000 73px 83px,#e60000 83px 94px,#ff0000 94px 111px,#ff0f00 111px 132px,#ff1e00 132px 149px,#ff2d00 149px 165px,#ff3c00 165px 183px,#ff4b00 183px 208px,#ff5a00 208px 228px,#ff6900 228px 250px,#ff7800 250px 267px,#ff8700 267px 273px,#ff9600 273px 278px,#ffaa00 278px 283px,#ffbe00 283px 288px,#ffd700 288px 293px,#fff000 293px 301px,#ffff00 301px 305px,#faff1e 305px 313px,#f5ff64 313px 319px,#f0ffaa 319px 326px,#ebffd2 326px 331px,#f0fff0 331px 334px,#b4ffb4 334px 336px,#96fa96 336px 338px,#3ce664 338px 343px,#00d296 343px 347px,#00bebe 347px 351px,#00a0c8 351px 355px,#0082d2 355px 361px,#006edc 361px 366px,#0050e6 366px 373px,#0032f0 373px 380px,#0000ff 380px 388px,#0000d2 388px 395px,#0000aa 395px 401px,#000078 401px 411px)"></div>

<div class="lbl" style="left:73px;top:533px">3000</div>
<div class="lbl" style="left:135px;top:533px">4000</div>
<div class="lbl" style="left:198px;top:533px">5000</div>
<div class="lbl" style="left:260px;top:533px">6000</div>
<div class="lbl" style="left:323px;top:533px">7000</div>
<div class="lbl" style="left:385px;top:533px">8000</div>
<div class="lbl" style="left:448px;top:533px">9000</div>
<div class="lbl" style="left:506px;top:533px">10000</div>
<div class="lbl" style="left:241px;top:553px;letter-spacing:-0.12px">Mass/Charge (M/Z)</div>
<div class="lbl" style="left:77px;top:133px">1</div>
<div class="lbl" style="left:77px;top:185px">2</div>
<div class="lbl" style="left:77px;top:236px">3</div>
<div class="lbl" style="left:77px;top:287px">4</div>
<div class="lbl" style="left:77px;top:339px">5</div>
<div class="lbl" style="left:77px;top:390px">6</div>
<div class="lbl" style="left:77px;top:441px">7</div>
<div class="lbl" style="left:77px;top:493px">8</div>
<div class="lbl" style="left:-12px;top:313px;transform:rotate(-90deg);transform-origin:center;width:146px;text-align:center">Spectrogram Indices</div>
<div class="lbl" style="left:542px;top:312px;transform:rotate(-90deg);transform-origin:center;width:122px;text-align:center">Relative Intensity</div>
</body></html>
